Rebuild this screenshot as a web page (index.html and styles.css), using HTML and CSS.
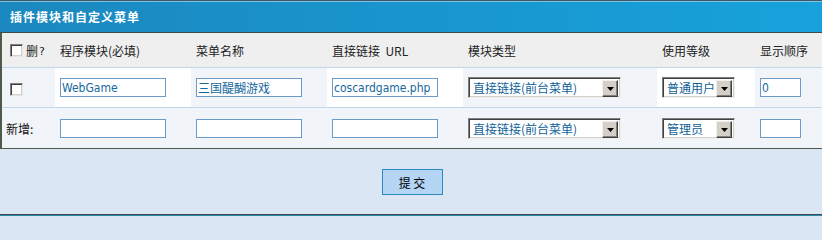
FILE: index.html
```html
<!DOCTYPE html>
<html lang="zh-CN">
<head>
<meta charset="utf-8">
<title>插件模块和自定义菜单</title>
<link rel="stylesheet" href="styles.css">
</head>
<body>
<div class="panel">
  <div class="title">插件模块和自定义菜单</div>
  <table class="grid">
    <colgroup>
      <col class="c1"><col class="c2"><col class="c3"><col class="c4"><col class="c5"><col class="c6"><col class="c7">
    </colgroup>
    <tr class="head">
      <td class="first"><label class="del"><input type="checkbox" class="chk">删<span class="q">?</span></label></td>
      <td>程序模块(必填)</td>
      <td>菜单名称</td>
      <td>直接链接&nbsp; URL</td>
      <td>模块类型</td>
      <td>使用等级</td>
      <td>显示顺序</td>
    </tr>
    <tr class="row alt">
      <td class="first"><input type="checkbox" class="chk"></td>
      <td class="w"><input type="text" class="txt" value="WebGame"></td>
      <td><input type="text" class="txt" value="三国醍醐游戏"></td>
      <td class="w"><input type="text" class="txt" value="coscardgame.php"></td>
      <td><span class="sel wide"><span class="sel-text">直接链接(前台菜单)</span><span class="sel-btn"><svg width="7" height="4" viewBox="0 0 7 4"><path d="M0 0H7L3.5 4Z" fill="#000"/></svg></span></span></td>
      <td class="w"><span class="sel narrow"><span class="sel-text">普通用户</span><span class="sel-btn"><svg width="7" height="4" viewBox="0 0 7 4"><path d="M0 0H7L3.5 4Z" fill="#000"/></svg></span></span></td>
      <td><input type="text" class="txt short" value="0"></td>
    </tr>
    <tr class="row add">
      <td class="first label">新增:</td>
      <td><input type="text" class="txt"></td>
      <td><input type="text" class="txt"></td>
      <td><input type="text" class="txt"></td>
      <td><span class="sel wide"><span class="sel-text">直接链接(前台菜单)</span><span class="sel-btn"><svg width="7" height="4" viewBox="0 0 7 4"><path d="M0 0H7L3.5 4Z" fill="#000"/></svg></span></span></td>
      <td><span class="sel narrow"><span class="sel-text">管理员</span><span class="sel-btn"><svg width="7" height="4" viewBox="0 0 7 4"><path d="M0 0H7L3.5 4Z" fill="#000"/></svg></span></span></td>
      <td><input type="text" class="txt short"></td>
    </tr>
  </table>
</div>
<div class="footer">
  <button type="submit" class="submit">提&nbsp;交</button>
</div>
<div class="bottom"></div>
</body>
</html>
```
FILE: styles.css
```css
* { box-sizing: border-box; }
html, body {
  margin: 0;
  padding: 0;
  background: #dae6f3;
  font-family: "Noto Sans CJK SC", "DejaVu Sans", sans-serif;
  font-size: 12px;
  color: #222;
}
html { height: 216px; overflow: hidden; }
.panel {
  width: 822px;
  background: #f1f4f8;
}
.title {
  height: 33px;
  border-top: 1px solid #3e5866;
  border-bottom: 1px solid #3f4b45;
  box-shadow: inset 0 1px 0 #7fc1e2;
  background: linear-gradient(to right, #1b88bf, #17a2db);
  color: #fff;
  font-weight: bold;
  font-size: 12px;
  letter-spacing: 1px;
  line-height: 31px;
  padding-left: 10px;
}
.grid {
  width: 822px;
  border-collapse: separate;
  border-spacing: 0;
  table-layout: fixed;
  border-left: 2px solid #4f5b4a;
  border-bottom: 1px solid #4f5b4a;
}
.c1 { width: 53px; }
.c2 { width: 136px; }
.c3 { width: 136px; }
.c4 { width: 136px; }
.c5 { width: 194px; }
.c6 { width: 98px; }
.c7 { width: 67px; }
.grid td {
  padding: 0 0 0 5px;
  vertical-align: middle;
  white-space: nowrap;
}
.head td {
  height: 35px;
  background: #efefef;
  border-bottom: 1px solid #c0d8ef;
  padding-top: 1px;
}
.row.alt td {
  height: 40px;
  background: #f1f4f8;
  border-bottom: 1px solid #c0d8ef;
}
.row.alt td.w { background: #fff; }
.row.add td {
  height: 40px;
  background: #f1f4f8;
}
.grid td.label { padding-left: 4px; color: #111; }
.del { display: inline-flex; align-items: center; }
.q { font-size: 11px; margin-left: 1px; padding-top: 3px; font-family: "DejaVu Sans", sans-serif; }
.chk {
  -webkit-appearance: none;
  appearance: none;
  width: 13px;
  height: 13px;
  margin: 0 3px 0 3px;
  vertical-align: middle;
  background: #fff;
  border-top: 1px solid #808080;
  border-left: 1px solid #808080;
  border-right: 1px solid #e6e6e6;
  border-bottom: 1px solid #e6e6e6;
  box-shadow: inset 1px 1px 0 #404040, inset -1px -1px 0 #d4d0c8;
}
.row .chk { margin-top: 1px; }
.txt {
  display: block;
  width: 106px;
  height: 19px;
  margin: 0;
  padding: 0 1px;
  border: 1px solid #6a9bcb;
  background: #fff;
  color: #16689d;
  font-family: "DejaVu Sans Condensed", "DejaVu Sans", "Noto Sans CJK SC", sans-serif;
  font-stretch: condensed;
  font-size: 12px;
  outline: none;
}
.txt.short { width: 41px; }
.sel {
  position: relative;
  display: flex;
  align-items: center;
  height: 21px;
  background: #fff;
  border-top: 1px solid #808080;
  border-left: 1px solid #808080;
  border-right: 1px solid #f0f0f0;
  border-bottom: 1px solid #f0f0f0;
  box-shadow: inset 1px 1px 0 #404040, inset -1px -1px 0 #d4d0c8;
  color: #0f5f98;
  overflow: hidden;
}
.sel.wide { width: 153px; }
.sel.narrow { width: 73px; }
.sel-text { padding-left: 4px; line-height: 19px; }
.sel-btn {
  position: absolute;
  right: 2px;
  top: 2px;
  width: 16px;
  height: 17px;
  background: #d4d0c8;
  border-top: 1px solid #f0f0f0;
  border-left: 1px solid #f0f0f0;
  border-right: 1px solid #404040;
  border-bottom: 1px solid #404040;
  box-shadow: inset -1px -1px 0 #808080;
  display: flex;
  align-items: center;
  justify-content: center;
}
.sel-btn svg { display: block; margin-top: 1px; }
.footer {
  height: 65px;
  display: flex;
  align-items: center;
  justify-content: center;
  padding-left: 2px;
}
.submit {
  width: 61px;
  height: 26px;
  background: #b5d5f5;
  border: 1px solid #2a8cbd;
  color: #000;
  font-family: "Noto Sans CJK SC", sans-serif;
  font-size: 12px;
  padding: 0;
  margin-top: 1px;
}
.bottom {
  height: 2px;
  border-top: 1px solid #3f4b45;
  background: #2b88a8;
}
```
